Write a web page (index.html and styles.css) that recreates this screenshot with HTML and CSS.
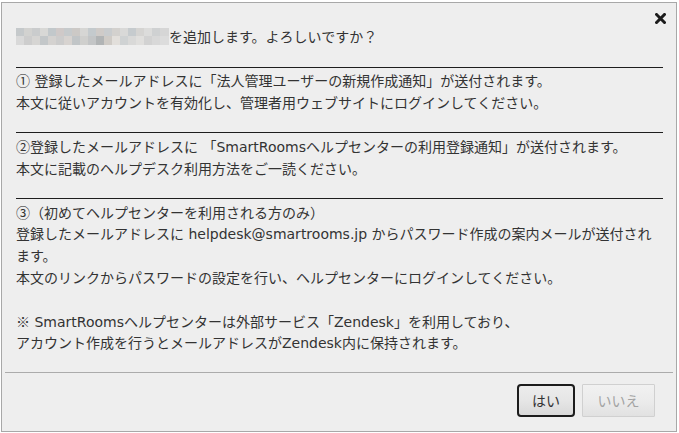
FILE: index.html
```html
<!DOCTYPE html>
<html lang="ja">
<head>
  <meta charset="UTF-8">
  <title>確認</title>
  <link rel="stylesheet" href="styles.css">
</head>
<body>
<div class="dialog">
  <div class="dlg-head">
    <a class="close" href="#" title="閉じる">
      <svg width="11" height="11" viewBox="0 0 11 11"><path d="M1.5 1.5 L9.5 9.5 M9.5 1.5 L1.5 9.5" stroke="#1b1b1b" stroke-width="3" stroke-linecap="square"/></svg>
    </a>
  </div>
  <div class="dlg-body">
    <p class="line"><svg class="mosaic" width="153" height="17" viewBox="0 0 153 17">
      <rect x="0" y="0" width="8" height="8" fill="#c5c9cb"/><rect x="8" y="0" width="8" height="8" fill="#d2d2d0"/><rect x="16" y="0" width="8" height="8" fill="#cacccd"/><rect x="24" y="0" width="8" height="8" fill="#d8d8d6"/><rect x="32" y="0" width="8" height="8" fill="#c2c8cb"/><rect x="40" y="0" width="8" height="8" fill="#cfc9c8"/><rect x="48" y="0" width="8" height="8" fill="#c6cacc"/><rect x="56" y="0" width="8" height="8" fill="#ccc9c6"/><rect x="64" y="0" width="8" height="8" fill="#d6d6d4"/><rect x="72" y="0" width="8" height="8" fill="#c4cacd"/><rect x="80" y="0" width="8" height="8" fill="#cfcbc8"/><rect x="88" y="0" width="8" height="8" fill="#c9ccce"/><rect x="96" y="0" width="8" height="8" fill="#d3d1ce"/><rect x="104" y="0" width="8" height="8" fill="#d9d9d8"/><rect x="112" y="0" width="8" height="8" fill="#c6cbce"/><rect x="120" y="0" width="8" height="8" fill="#d5d4d2"/><rect x="128" y="0" width="8" height="8" fill="#dcdcdb"/><rect x="136" y="0" width="8" height="8" fill="#cfd1d2"/><rect x="144" y="0" width="9" height="8" fill="#d6d6d6"/>
      <rect x="0" y="8" width="8" height="9" fill="#d9d9d9"/><rect x="8" y="8" width="8" height="9" fill="#cdcdcd"/><rect x="16" y="8" width="8" height="9" fill="#d6d5d3"/><rect x="24" y="8" width="8" height="9" fill="#c3c7c9"/><rect x="32" y="8" width="8" height="9" fill="#d4d2d0"/><rect x="40" y="8" width="8" height="9" fill="#cccccc"/><rect x="48" y="8" width="8" height="9" fill="#d7d3d0"/><rect x="56" y="8" width="8" height="9" fill="#c1c5c7"/><rect x="64" y="8" width="8" height="9" fill="#cfcfcd"/><rect x="72" y="8" width="8" height="9" fill="#c3c5c6"/><rect x="80" y="8" width="8" height="9" fill="#b1b4b5"/><rect x="88" y="8" width="8" height="9" fill="#cfcbc6"/><rect x="96" y="8" width="8" height="9" fill="#e2dfdb"/><rect x="104" y="8" width="8" height="9" fill="#cfd2d3"/><rect x="112" y="8" width="8" height="9" fill="#d9d9d8"/><rect x="120" y="8" width="8" height="9" fill="#e0dfdd"/><rect x="128" y="8" width="8" height="9" fill="#d2d2d2"/><rect x="136" y="8" width="8" height="9" fill="#d8d8d8"/><rect x="144" y="8" width="9" height="9" fill="#dcdcdc"/>
    </svg>を追加します。よろしいですか？</p>

    <div class="rule"></div>
    <p class="line"><span class="cjk">①</span> 登録したメールアドレスに「法人管理ユーザーの新規作成通知」が送付されます。</p>
    <p class="line">本文に従いアカウントを有効化し、管理者用ウェブサイトにログインしてください。</p>

    <div class="rule"></div>
    <p class="line"><span class="cjk">②</span>登録したメールアドレスに 「SmartRoomsヘルプセンターの利用登録通知」が送付されます。</p>
    <p class="line">本文に記載のヘルプデスク利用方法をご一読ください。</p>

    <div class="rule"></div>
    <p class="line"><span class="cjk">③</span>（初めてヘルプセンターを利用される方のみ）</p>
    <p class="line">登録したメールアドレスに helpdesk@smartrooms.jp からパスワード作成の案内メールが送付され<br>ます。</p>
    <p class="line">本文のリンクからパスワードの設定を行い、ヘルプセンターにログインしてください。</p>
    <p class="line">&nbsp;</p>
    <p class="line"><span class="cjk">※</span> SmartRoomsヘルプセンターは外部サービス「Zendesk」を利用しており、</p>
    <p class="line">アカウント作成を行うとメールアドレスがZendesk内に保持されます。</p>
  </div>
  <div class="dlg-foot">
    <button class="btn btn-yes" type="button">はい</button>
    <button class="btn btn-no" type="button" disabled>いいえ</button>
  </div>
</div>
</body>
</html>
```

FILE: styles.css
```css
* {
  margin: 0;
  padding: 0;
}

body {
  background-color: #fff;
  font-family: "DejaVu Sans", "Noto Sans CJK JP", sans-serif;
  font-size: 14px;
  color: #333;
}

.dialog {
  box-sizing: border-box;
  height: 430px;
  margin: 2px 2px 0 1px;
  border: 1px solid #a8a8a8;
  background-color: #eeeeee;
  display: flex;
  flex-direction: column;
}

.dlg-head {
  height: 24px;
  display: flex;
  justify-content: flex-end;
  align-items: flex-start;
  padding-right: 10px;
}

.close {
  display: block;
  width: 11px;
  height: 11px;
  margin-top: 10px;
}

.close svg {
  display: block;
}

.dlg-body {
  padding: 0 14px;
}

.line {
  line-height: 21.6px;
  white-space: nowrap;
}

.cjk {
  font-family: "Noto Sans CJK JP", sans-serif;
}

.mosaic {
  vertical-align: -3px;
}

.rule {
  width: 647px;
  height: 18px;
  margin-bottom: 2.6px;
  border-bottom: 1px solid #1e1e1e;
}

.dlg-foot {
  margin: 17px 3px 0 3px;
  border-top: 1px solid #ababab;
  padding: 11px 18px 0 0;
  display: flex;
  justify-content: flex-end;
  gap: 7px;
}

.btn {
  box-sizing: border-box;
  height: 33px;
  font-family: "Noto Sans CJK JP", sans-serif;
  font-size: 14px;
  cursor: pointer;
}

.btn-yes {
  width: 58px;
  border: 2px solid #1c1c1c;
  border-radius: 4px;
  background: linear-gradient(to bottom, #ececec 0%, #e6e6e6 50%, #d9d9d9 100%);
  color: #333;
}

.btn-no {
  width: 73px;
  border: 1px solid #d0d0d0;
  border-radius: 1px;
  background: linear-gradient(to bottom, #f1f1f1 0%, #ebebeb 55%, #e1e1e1 100%);
  color: #a3a3a3;
  cursor: default;
}
```
